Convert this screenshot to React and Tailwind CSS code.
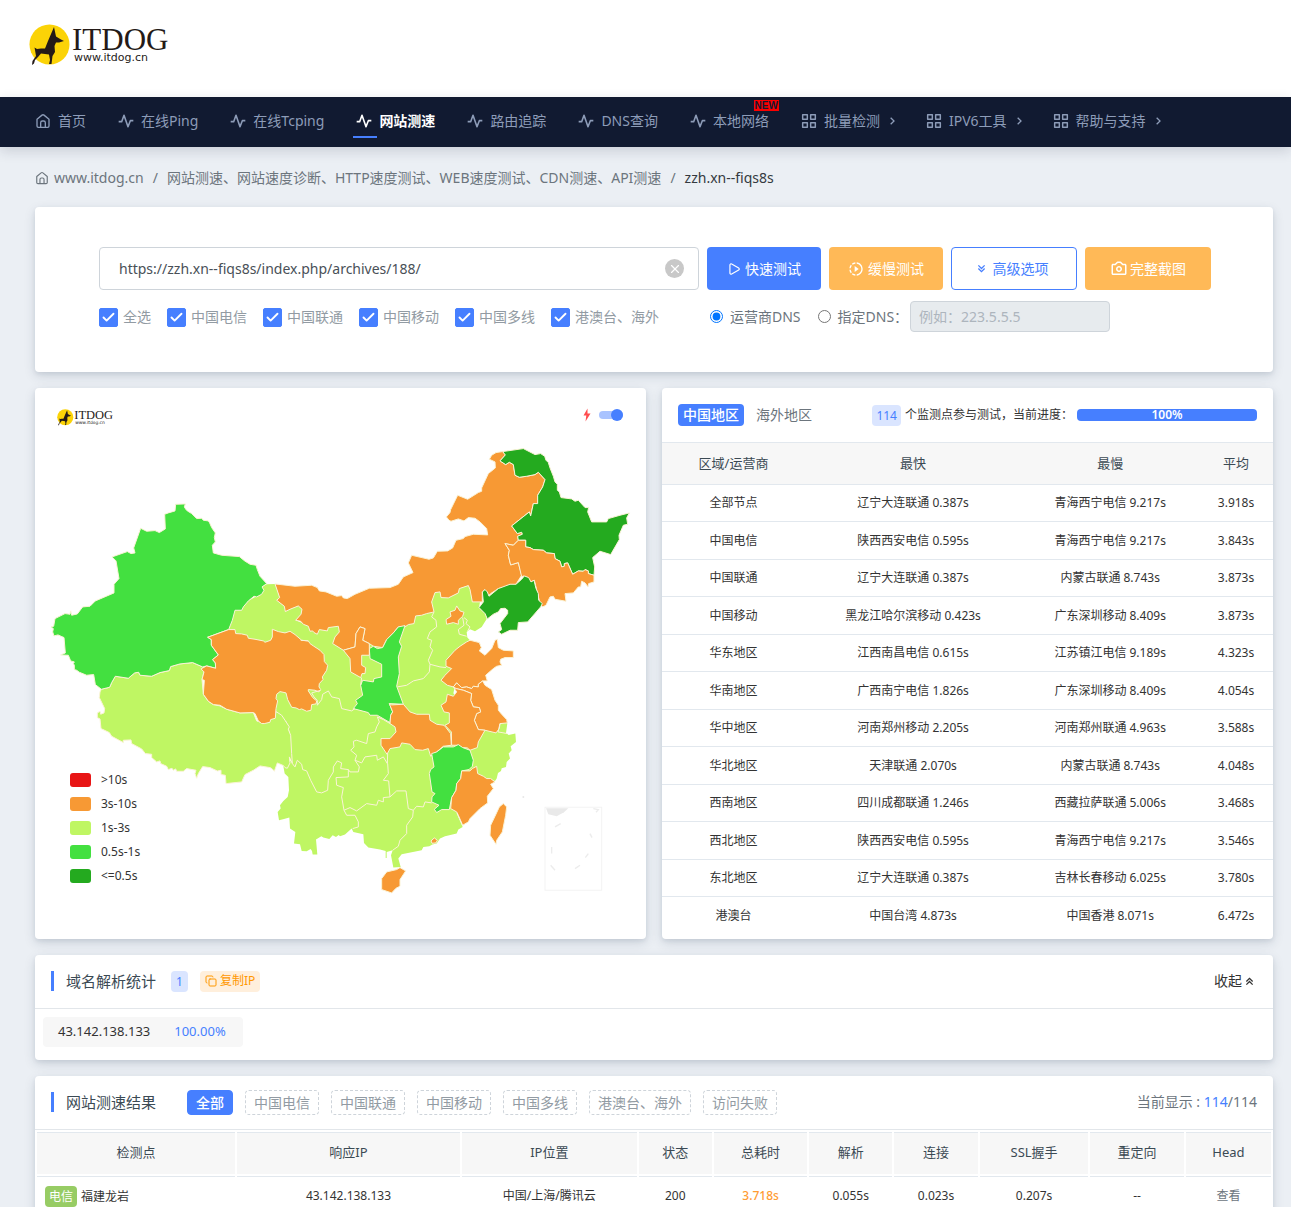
import React from "react";
import { BiCamera, BiChevronsDown, BiChevronsUp, BiChevronRight } from "react-icons/bi";
import { MdOutlineSlowMotionVideo } from "react-icons/md";
import { Play, Check, X, Copy } from "lucide-react";

const cardShadow = "shadow-[0_4px_12px_rgba(30,50,80,0.14),0_2px_4px_rgba(30,50,80,0.08)]";

function StrokeIcon({ size, className, children }) {
  return (
    <svg
      width={size}
      height={size}
      viewBox="0 0 24 24"
      fill="none"
      stroke="currentColor"
      strokeWidth="2"
      strokeLinejoin="round"
      className={className}
      aria-hidden="true"
    >
      {children}
    </svg>
  );
}

function HomeIcon(props) {
  return (
    <StrokeIcon {...props}>
      <path d="M3 9.500 L10.500 3.200 Q12 2 13.500 3.200 L21 9.500 V19.500 Q21 21.500 19 21.500 H5 Q3 21.500 3 19.500 Z" />
      <path d="M8.500 21 V14.500 Q8.500 12 11 12 H13 Q15.500 12 15.500 14.500 V21" />
    </StrokeIcon>
  );
}

function PulseIcon(props) {
  return (
    <StrokeIcon {...props}>
      <path d="M1 13 H5.500 L9 3.500 L15 20.500 L18.500 11.500 H23" strokeWidth="2.400" />
    </StrokeIcon>
  );
}

function GridIcon(props) {
  return (
    <StrokeIcon {...props}>
      <path
        d="M2.500 2.500 H9.500 V9.500 H2.500 Z M14.500 2.500 H21.500 V9.500 H14.500 Z M2.500 14.500 H9.500 V21.500 H2.500 Z M14.500 14.500 H21.500 V21.500 H14.500 Z"
        strokeWidth="2.200"
      />
    </StrokeIcon>
  );
}

function Logo({ className }) {
  return (
    <svg viewBox="0 0 144 42" className={className} role="img" aria-label="ITDOG">
      <circle cx="20.500" cy="20.500" r="20" fill="#fbd307" />
      <path
        d="M25 3 L27 12.500 L32 15.500 L35 17 L30 18.500 L27 18.500 L25.500 22 L26 28 L23.500 32 L22.500 40 L20 40 L21 36 L20 30.500 L12 29.500 L9 33 L6 36 L5 39.500 L3 41 L3.500 37 L7 32 L6 26 L5.500 23.500 L8 25 L12 24.500 L16 24.500 L19 17 Z"
        fill="#241a17"
      />
      <text x="43" y="26" fontSize="31" fontFamily="'Liberation Serif', serif" fill="#241a17">
        ITDOG
      </text>
      <text x="45" y="37" fontSize="11" fontFamily="'DejaVu Sans', sans-serif" fill="#241a17">
        www.itdog.cn
      </text>
    </svg>
  );
}

const navItems = [
  { label: "首页", icon: HomeIcon },
  { label: "在线Ping", icon: PulseIcon },
  { label: "在线Tcping", icon: PulseIcon },
  { label: "网站测速", icon: PulseIcon, active: true },
  { label: "路由追踪", icon: PulseIcon },
  { label: "DNS查询", icon: PulseIcon },
  { label: "本地网络", icon: PulseIcon, isNew: true },
  { label: "批量检测", icon: GridIcon, more: true },
  { label: "IPV6工具", icon: GridIcon, more: true },
  { label: "帮助与支持", icon: GridIcon, more: true },
];

function Nav() {
  return (
    <nav className="bg-[#111a31] h-[50px] pl-[35px] pr-4 flex items-stretch gap-8 text-sm text-[#8d9cb8] shadow-[0_4px_12px_rgba(30,40,70,0.16)] relative">
      {navItems.map(({ label, icon: Icon, active, isNew, more }) => (
        <a
          key={label}
          href="#"
          className={
            "relative flex items-center pb-0.5 whitespace-nowrap " + (active ? "text-white font-bold" : "")
          }
        >
          <Icon size={16} className="mr-[7px] shrink-0" />
          {label}
          {more && <BiChevronRight size={16} className="ml-1 -mr-1.5" />}
          {active && <span className="absolute -left-[3px] bottom-[9px] w-6 h-0.5 bg-[#467fff]" />}
          {isNew && (
            <span className="absolute -right-2.5 top-[3px] bg-[#fb0000] text-[#111a31] text-[10px] leading-[11px] font-bold px-px font-['Liberation_Sans',sans-serif]">
              NEW
            </span>
          )}
        </a>
      ))}
    </nav>
  );
}

const isps = ["全选", "中国电信", "中国联通", "中国移动", "中国多线", "港澳台、海外"];

function SearchCard() {
  return (
    <form
      onSubmit={(e) => e.preventDefault()}
      className={"bg-white rounded pt-10 pb-10 pl-16 pr-[62px] " + cardShadow}
    >
      <div className="flex gap-2">
        <div className="flex-1 h-[43px] flex items-center border border-[#ced4da] rounded-sm pl-[19px] pr-3.5">
          <input
            type="text"
            aria-label="网址"
            defaultValue="https://zzh.xn--fiqs8s/index.php/archives/188/"
            className="flex-1 min-w-0 text-sm text-[#495057] outline-none"
          />
          <button
            type="button"
            aria-label="清除"
            className="size-[19px] rounded-full bg-[#c8c8c8] text-white flex items-center justify-center"
          >
            <X size={14} />
          </button>
        </div>
        <button className="w-[114px] rounded-sm bg-[#467fff] text-white text-sm flex items-center justify-center gap-1">
          <Play size={14} />
          快速测试
        </button>
        <button className="w-[114px] rounded-sm bg-[#ffb957] text-white text-sm flex items-center justify-center gap-1">
          <MdOutlineSlowMotionVideo size={16} />
          缓慢测试
        </button>
        <button className="w-[126px] rounded-sm border border-[#467fff] text-[#467fff] text-sm flex items-center justify-center gap-1 pr-1.5">
          <BiChevronsDown size={15} />
          高级选项
        </button>
        <button className="w-[126px] rounded-sm bg-[#ffb957] text-white text-sm flex items-center justify-center gap-0.5">
          <BiCamera size={18} />
          完整截图
        </button>
      </div>
      <div className="grid grid-cols-[1fr_504px] gap-2 mt-[11px] text-sm">
        <div className="flex items-center gap-4 text-[#929ba3] whitespace-nowrap pt-px">
          {isps.map((t) => (
            <label key={t} className="flex items-center gap-[5px]">
              <span className="grid place-items-center size-[19px]">
                <input
                  type="checkbox"
                  defaultChecked
                  className="appearance-none size-[19px] rounded-xs border border-[#467fff] checked:bg-[#467fff] [grid-area:1/1]"
                />
                <Check size={15} strokeWidth={3} className="text-white pointer-events-none [grid-area:1/1] z-10" />
              </span>
              {t}
            </label>
          ))}
        </div>
        <div className="flex items-center text-[#6c757d] pl-[3px] whitespace-nowrap">
          <label className="flex items-center gap-[7px] mr-[17px]">
            <input type="radio" name="dns" defaultChecked className="size-[13px] accent-[#0075ff]" />
            运营商DNS
          </label>
          <label className="flex items-center gap-[7px] mr-0.5">
            <input type="radio" name="dns" className="size-[13px]" />
            指定DNS：
          </label>
          <input
            type="text"
            disabled
            aria-label="指定DNS"
            placeholder="例如：223.5.5.5"
            className="w-[200px] h-[31px] rounded-sm border border-[#ced4da] bg-[#e7ebee] px-2 placeholder:text-[#adb5bd]"
          />
        </div>
      </div>
    </form>
  );
}

const C = { red: "#e81515", orange: "#f79934", lime: "#bff663", green: "#43e040", dark: "#24aa1f" };

/* Lime area that carries all the southern and central provinces. */
const limeBase =
  "-34,208 -22,165 -15,150 5,150 12,138 25,122 50,108 72,90 66,80 80,72 105,71 119,112 110,120 133,138 136,154 150,147 175,137 186,147 183,162 167,180 190,190 300,192 400,190 480,150 575,155 575,120 585,97 600,95 603,112 625,113 655,98 658,85 685,76 690,88 697,125 720,125 717,142 735,160 740,176 725,200 705,213 690,207 680,215 682,232 690,240 660,300 640,400 720,450 778,492 797,485 802,490 798,518 806,524 826,520 828,545 812,558 815,570 806,580 810,595 800,605 798,620 785,624 783,632 774,638 770,655 765,662 700,640 650,760 668,800 655,808 650,820 615,828 600,835 590,850 577,853 568,858 550,860 545,870 515,876 485,882 475,895 482,920 460,922 453,885 458,870 440,875 440,893 437,893 437,872 420,868 385,862 372,848 370,822 340,815 335,805 315,823 300,828 296,824 288,830 278,825 268,836 250,832 244,828 228,838 232,883 218,883 216,872 212,866 200,873 185,872 180,852 162,850 166,815 150,805 148,772 132,776 117,780 113,755 122,745 120,735 130,722 143,710 147,690 145,650 134,640 130,618 155,600 150,520 140,485 110,455 0,320";

const provinces = [
  {
    name: "西藏",
    color: C.lime,
    points:
      "-416,387 -391,381 -385,367 -374,348 -335,354 -316,338 -304,336 -300,345 -265,348 -240,337 -212,331 -208,319 -180,311 -142,307 -112,320 -100,317 -108,335 -114,358 -110,402 -95,423 -80,433 -60,437 -40,447 0,458 40,457 50,482 73,490 110,455 125,465 135,480 148,500 145,507 152,525 155,580 157,610 148,590 150,608 142,624 135,622 130,616 112,608 103,633 97,626 90,622 60,617 40,630 15,643 5,665 -42,670 -44,645 -57,643 -57,630 -68,632 -90,622 -112,619 -125,640 -130,654 -135,640 -132,630 -160,625 -170,633 -190,633 -193,626 -200,630 -204,624 -215,628 -220,618 -238,610 -240,602 -250,605 -265,592 -265,582 -284,580 -295,566 -325,550 -327,539 -350,540 -350,547 -385,528 -392,517 -417,505 -420,476 -428,472 -428,458 -420,453 -418,462 -408,458 -406,445 -422,412 -420,395",
  },
  {
    name: "新疆",
    color: C.green,
    points:
      "-193,-168 -164,-169 -167,-160 -162,-152 -158,-148 -145,-140 -130,-125 -115,-126 -110,-120 -95,-118 -91,-112 -85,-98 -74,-82 -77,-68 -74,-55 -83,-45 -80,-22 -55,-15 -2,-11 14,2 30,12 48,15 52,28 60,48 80,70 66,80 72,90 65,102 50,110 42,108 25,122 10,140 5,150 -15,150 -23,180 -34,208 -97,231 -86,238 -86,255 -65,284 -82,298 -74,308 -73,324 -100,317 -112,320 -142,307 -180,311 -208,319 -212,331 -240,337 -265,348 -300,345 -304,336 -316,338 -335,354 -374,348 -385,367 -391,381 -416,387 -434,373 -439,343 -460,345 -482,336 -490,330 -497,328 -497,315 -500,310 -497,305 -508,302 -515,285 -538,284 -524,278 -528,232 -546,224 -558,227 -562,215 -560,205 -567,200 -559,198 -555,175 -525,160 -510,162 -508,152 -505,165 -488,161 -472,140 -450,138 -434,122 -378,98 -378,72 -363,55 -372,2 -384,-10 -338,-26 -327,-20 -315,-22 -319,-37 -298,-96 -280,-87 -255,-89 -242,-83 -224,-94 -226,-138 -215,-142 -195,-148",
  },
  {
    name: "内蒙古",
    color: C.orange,
    points:
      "105,71 165,78 215,75 232,82 238,92 258,95 290,108 305,106 310,113 322,115 345,102 388,84 450,82 475,72 490,50 519,37 505,8 515,-15 567,-3 580,-7 592,-27 623,-28 638,-37 648,-60 670,-65 675,-71 700,-78 743,-76 740,-95 720,-115 705,-126 685,-128 672,-118 655,-124 633,-117 627,-120 619,-130 630,-143 632,-152 653,-195 683,-183 715,-203 725,-207 725,-217 745,-260 766,-277 765,-295 748,-303 755,-315 768,-323 788,-326 796,-316 780,-298 797,-287 808,-294 820,-287 825,-255 838,-249 860,-252 885,-257 895,-264 915,-242 908,-220 893,-195 893,-170 880,-170 872,-133 868,-145 815,-103 832,-80 845,-84 847,-78 833,-72 835,-60 820,-45 795,-50 808,-30 805,-15 812,14 835,7 845,45 828,72 775,85 752,100 745,107 735,88 727,95 727,125 697,125 690,88 685,76 658,85 655,98 625,113 603,112 600,95 585,97 575,125 582,155 560,160 545,165 527,167 522,190 505,193 495,200 475,200 460,218 440,238 428,262 400,258 388,250 368,240 375,205 360,200 348,220 345,260 310,270 278,250 285,230 298,215 295,198 265,202 262,212 238,208 232,222 222,217 218,212 210,213 205,198 190,192 182,183 167,180 183,162 186,147 175,137 150,147 136,154 133,138 110,120 119,112",
  },
  {
    name: "黑龙江",
    color: C.dark,
    points:
      "788,-326 850,-335 885,-317 902,-320 914,-312 918,-300 925,-293 930,-277 940,-252 945,-235 952,-228 952,-210 958,-205 963,-188 995,-184 1005,-177 1015,-180 1035,-158 1046,-158 1043,-145 1055,-115 1100,-115 1105,-125 1140,-135 1168,-142 1160,-127 1163,-108 1150,-105 1137,-75 1138,-62 1112,-17 1080,-27 1058,-8 1064,20 1062,45 1045,40 1045,32 1035,28 1030,33 1015,32 998,42 983,8 973,10 973,18 965,20 960,3 945,-5 943,-20 920,-22 910,-30 880,-32 870,-38 857,-40 857,-60 835,-60 833,-72 847,-78 845,-84 832,-80 815,-103 868,-145 872,-133 880,-170 893,-170 893,-195 908,-220 915,-242 895,-264 885,-257 860,-252 838,-249 825,-255 820,-287 808,-294 797,-287 780,-298 796,-316",
  },
  {
    name: "吉林",
    color: C.orange,
    points:
      "857,-60 835,-60 820,-45 795,-50 808,-30 805,-15 812,14 835,7 845,50 850,47 873,65 883,60 900,130 908,140 918,135 930,110 940,108 945,117 978,123 975,100 1000,98 1015,80 1022,80 1025,63 1035,68 1044,80 1046,70 1062,65 1062,45 1045,40 1045,32 1035,28 1030,33 1015,32 998,42 983,8 973,10 973,18 965,20 960,3 945,-5 943,-20 920,-22 910,-30 880,-32 870,-38 857,-40",
  },
  {
    name: "辽宁",
    color: C.dark,
    points:
      "845,57 853,47 866,52 873,65 882,60 888,85 895,100 896,120 907,130 902,140 863,185 835,187 833,210 810,210 785,222 775,215 785,208 780,190 803,160 803,150 795,144 782,145 775,155 760,162 742,176 735,160 717,142 730,125 727,95 735,88 742,95 747,108 775,85 810,72 828,72",
  },
  {
    name: "青海",
    color: C.orange,
    points:
      "-97,231 -34,208 -15,208 -13,220 5,221 22,225 25,234 45,237 70,242 75,246 92,240 97,230 97,207 115,214 135,218 150,213 165,223 185,240 205,242 210,250 220,257 240,270 252,283 253,304 263,315 260,330 247,350 249,358 238,370 237,380 242,388 237,395 225,390 205,388 205,392 218,412 230,422 228,431 215,433 213,450 200,453 185,446 178,448 168,443 155,441 143,418 138,398 120,394 110,402 108,415 113,422 108,445 106,474 92,478 90,486 73,490 65,490 55,482 45,460 40,457 0,458 -40,447 -60,435 -80,433 -95,423 -110,402 -107,360 -114,358 -108,335 -117,326 -100,317 -73,324 -74,308 -82,298 -65,284 -86,255 -86,238",
  },
  {
    name: "陕西",
    color: C.green,
    points:
      "495,196 475,200 460,218 440,238 428,262 412,265 400,258 388,265 390,295 425,312 425,350 402,355 400,365 368,360 362,375 368,405 347,420 352,430 340,445 385,457 390,465 412,465 450,487 452,465 458,455 448,430 490,432 470,378 478,340 475,290 485,258 478,245",
  },
  {
    name: "宁夏",
    color: C.orange,
    points:
      "310,270 345,260 348,220 360,200 375,205 368,240 388,250 388,285 365,285 365,315 377,322 375,340 366,340 362,352 332,335 330,295",
  },
  {
    name: "北京",
    color: C.orange,
    points: "618,178 633,168 630,155 645,150 650,137 660,152 672,156 668,168 655,180 655,192 640,187 620,192",
  },
  {
    name: "山东",
    color: C.orange,
    points:
      "680,245 690,240 718,247 724,262 718,272 735,285 755,265 765,240 772,237 775,262 790,270 820,272 820,292 795,292 782,297 780,305 785,315 770,318 760,325 737,345 742,362 728,362 715,372 715,380 700,378 695,385 680,380 665,382 650,368 640,380 622,375 603,360 615,345 635,325 618,318 618,300 645,270 660,258",
  },
  {
    name: "江苏",
    color: C.orange,
    points:
      "640,380 650,368 665,382 680,380 695,385 700,378 715,380 715,372 728,362 735,375 755,388 765,420 775,435 775,450 785,462 800,478 802,488 780,490 778,505 768,518 735,510 715,508 703,480 710,460 722,455 718,442 700,440 692,420 695,400 670,390 648,385",
  },
  {
    name: "安徽",
    color: C.orange,
    points:
      "640,380 648,385 670,390 695,400 692,420 700,440 718,442 722,455 710,460 703,480 715,508 735,510 715,545 712,562 690,570 682,563 668,562 655,555 635,555 634,515 615,495 628,488 628,458 612,455 603,435 618,425 622,402 640,408 650,395",
  },
  {
    name: "湖北",
    color: C.orange,
    points:
      "448,430 455,434 490,432 510,455 530,462 568,462 570,480 590,492 612,495 618,502 632,520 634,555 610,558 590,575 572,588 565,565 548,570 525,568 510,552 485,548 480,560 450,565 441,582 423,555 423,535 450,535 468,515 465,500 450,490 452,465 458,455",
  },
  {
    name: "江西",
    color: C.green,
    points:
      "575,580 590,575 610,560 640,560 655,553 668,562 690,570 700,600 697,618 687,628 665,632 662,655 650,670 648,690 635,712 628,748 605,748 590,757 583,747 597,735 575,725 576,710 585,700 576,695 568,640 572,628 582,620",
  },
  {
    name: "福建",
    color: C.orange,
    points:
      "690,632 697,625 710,618 713,640 730,648 740,655 752,655 765,665 752,672 760,685 742,708 743,728 720,745 690,775 685,785 668,795 655,765 650,755 632,745 635,712 648,690 650,670 662,655 665,632",
  },
  { name: "台湾", color: C.orange, points: "778,740 790,730 800,740 797,765 787,815 770,840 768,852 750,825 752,795 765,768" },
  { name: "海南", color: C.orange, points: "440,935 470,928 480,922 497,932 480,958 480,978 468,984 455,998 425,988 425,955" },
  { name: "香港", color: C.orange, points: "573,842 583,833 592,840 588,848 576,849" },
];

const borders = [
  "582,155 575,170 588,180 590,200 570,215 562,235 575,240 570,260 578,270 565,300 570,312 600,320 618,322",
  "570,312 568,335 550,355 520,362 500,375 472,380",
  "668,172 672,195 655,208 658,222 680,228",
  "672,172 682,180 678,190 690,200 683,212",
  "242,390 215,398 222,410 232,420 232,435 245,418 248,402 265,392 275,410 298,415 305,445 335,452 345,445",
  "412,470 418,485 410,500 405,515 385,520 380,550 350,540 340,543 342,560 332,570 350,585 345,600 365,608 375,590 410,585 412,600 430,590 442,610 443,580",
  "412,470 430,478 450,490",
  "157,610 165,620 172,600 185,612 188,628 200,632 212,660 230,695 245,698 263,690 265,660 280,635 280,620 292,602 305,608 302,625 325,628 330,635 355,635 358,620 345,600",
  "325,628 325,650 288,652 290,675 310,682 305,710 312,750 330,742 350,752 380,730 410,735 415,720 430,725 430,712 450,710 470,692 498,692 505,745 520,750 530,738 550,740 555,725 575,728",
  "443,610 445,640 430,660 446,662 450,710",
  "520,750 518,770 500,795 500,820 480,840 475,858 458,870",
  "312,750 320,765 345,765 355,785 355,800 338,805",
  "780,490 774,515 802,520",
  "365,352 362,375",
  "182,240 205,242",
];

const legend = [
  [">10s", "bg-[#e81515]"],
  ["3s-10s", "bg-[#f79934]"],
  ["1s-3s", "bg-[#bff663]"],
  ["0.5s-1s", "bg-[#43e040]"],
  ["<=0.5s", "bg-[#24aa1f]"],
];

function MapCard() {
  return (
    <section className={"relative bg-white rounded " + cardShadow}>
      <svg viewBox="-615 -516 1833 1650" className="w-full h-full block" role="img" aria-label="中国地图">
        <polygon points={limeBase} fill={C.lime} />
        <g stroke="#fbf3d6" strokeWidth="3" strokeLinejoin="round">
          {provinces.map((p) => (
            <polygon key={p.name} points={p.points} fill={p.color} />
          ))}
          {borders.map((b) => (
            <polyline key={b} points={b} fill="none" />
          ))}
        </g>
        <rect x="915" y="741" width="170" height="249" fill="none" stroke="#f3f3f3" strokeWidth="3" />
        <path d="M918 744 H985 L972 756 L950 768 L925 762 Z" fill="#e9e9e9" />
        <path
          d="M1060 745 L1075 748 L1068 756 M962 790 L945 800 M1050 820 L1056 832 M935 860 V880 M1045 880 L1036 892 M1020 915 L1005 925 M932 915 L945 930"
          fill="none"
          stroke="#ececec"
          strokeWidth="4"
        />
        <circle cx="850" cy="710" r="3" fill="#e8e8e8" />
      </svg>
      <div className="absolute left-[22px] top-[21px] w-[58px]">
        <Logo className="w-full" />
      </div>
      <div className="absolute right-[23px] top-5 flex items-center gap-2">
        <svg width="8" height="14" viewBox="0 0 8 14" aria-hidden="true">
          <path d="M4.500 0.500 L0.500 7.500 H3.300 L2.500 13.500 L7.500 5.500 H4.500 Z" fill="#ff4d4f" />
        </svg>
        <label className="flex items-center w-6 h-3 relative">
          <input
            type="checkbox"
            defaultChecked
            aria-label="快速模式"
            className="appearance-none w-6 h-2 rounded-full bg-[#a9c3ff]"
          />
          <span className="absolute right-0 top-0 size-3 rounded-full bg-[#467fff]" />
        </label>
      </div>
      <ul className="absolute left-[35px] bottom-[51px] text-xs text-[#333]">
        {legend.map(([t, c]) => (
          <li key={t} className="flex items-center gap-2.5 h-6">
            <span className={"w-[21px] h-3.5 rounded-[3px] " + c} />
            {t}
          </li>
        ))}
      </ul>
    </section>
  );
}

const regionRows = [
  ["全部节点", "辽宁大连联通 0.387s", "青海西宁电信 9.217s", "3.918s"],
  ["中国电信", "陕西西安电信 0.595s", "青海西宁电信 9.217s", "3.843s"],
  ["中国联通", "辽宁大连联通 0.387s", "内蒙古联通 8.743s", "3.873s"],
  ["中国移动", "黑龙江哈尔滨移动 0.423s", "广东深圳移动 8.409s", "3.873s"],
  ["华东地区", "江西南昌电信 0.615s", "江苏镇江电信 9.189s", "4.323s"],
  ["华南地区", "广西南宁电信 1.826s", "广东深圳移动 8.409s", "4.054s"],
  ["华中地区", "河南郑州移动 2.205s", "河南郑州联通 4.963s", "3.588s"],
  ["华北地区", "天津联通 2.070s", "内蒙古联通 8.743s", "4.048s"],
  ["西南地区", "四川成都联通 1.246s", "西藏拉萨联通 5.006s", "3.468s"],
  ["西北地区", "陕西西安电信 0.595s", "青海西宁电信 9.217s", "3.546s"],
  ["东北地区", "辽宁大连联通 0.387s", "吉林长春移动 6.025s", "3.780s"],
  ["港澳台", "中国台湾 4.873s", "中国香港 8.071s", "6.472s"],
];

function RegionCard() {
  return (
    <section className={"bg-white rounded pb-1 " + cardShadow}>
      <header className="h-[54px] px-4 flex items-center justify-between whitespace-nowrap">
        <div className="flex items-center gap-3 text-sm">
          <button className="bg-[#467fff] text-white font-medium rounded px-[5px] h-[22px] leading-[22px]">中国地区</button>
          <button className="text-[#6c757d]">海外地区</button>
        </div>
        <div className="flex items-center text-xs text-[#333]">
          <span className="bg-[#dae5ff] text-[#467fff] rounded px-1 h-[21px] leading-[21px] mr-1">114</span>
          个监测点参与测试，当前进度：
          <div className="ml-1 w-[180px] h-3 rounded bg-[#467fff] text-white text-center leading-3 font-semibold">
            100%
          </div>
        </div>
      </header>
      <table className="w-full table-fixed text-xs text-center text-[#333] border-collapse">
        <thead>
          <tr className="h-[42px] bg-[#f7f7f7] border-y border-[#e2e8ee] text-[13px] text-[#3b4a54]">
            <th className="font-normal w-[23.4%]">区域/运营商</th>
            <th className="font-normal w-[35.4%]">最快</th>
            <th className="font-normal w-[29.1%]">最慢</th>
            <th className="font-normal">平均</th>
          </tr>
        </thead>
        <tbody>
          {regionRows.map((r) => (
            <tr key={r[0]} className="odd:h-[37px] even:h-[38px] border-b border-[#e2e8ee] last:border-0">
              {r.map((c, i) => (
                <td key={i}>{c}</td>
              ))}
            </tr>
          ))}
        </tbody>
      </table>
    </section>
  );
}

function CardTitle({ children }) {
  return <h2 className="border-l-[3px] border-[#467fff] h-5 leading-5 pl-3 text-[15px] text-[#3b4a54]">{children}</h2>;
}

function DnsCard() {
  return (
    <section className={"bg-white rounded " + cardShadow}>
      <header className="h-[54px] px-4 flex items-center border-b border-[#e2e6ea] whitespace-nowrap">
        <CardTitle>域名解析统计</CardTitle>
        <span className="ml-[15px] bg-[#dae5ff] text-[#467fff] text-xs rounded px-[5px] h-[21px] leading-[21px]">1</span>
        <button className="ml-3 bg-[#ffefdc] text-[#ff9800] text-xs rounded px-[5px] h-[21px] flex items-center gap-[3px]">
          <Copy size={12} />
          复制IP
        </button>
        <button className="ml-auto text-sm text-[#333] flex items-center">
          收起
          <BiChevronsUp size={15} />
        </button>
      </header>
      <div className="px-2 pt-2 pb-[13px]">
        <div className="w-[200px] h-[30px] rounded-sm bg-[#f7f7f7] flex items-center gap-6 pl-[15px] text-[13px] text-[#333]">
          43.142.138.133
          <span className="text-[#467fff]">100.00%</span>
        </div>
      </div>
    </section>
  );
}

const filters = ["全部", "中国电信", "中国联通", "中国移动", "中国多线", "港澳台、海外", "访问失败"];
const columns = [
  ["检测点", "w-[16.3%]"],
  ["响应IP", "w-[18.3%]"],
  ["IP位置", "w-[14.4%]"],
  ["状态", "w-[6%]"],
  ["总耗时", "w-[7.7%]"],
  ["解析", "w-[6.8%]"],
  ["连接", "w-[6.9%]"],
  ["SSL握手", "w-[8.9%]"],
  ["重定向", "w-[7.7%]"],
  ["Head", "w-[7%]"],
];

function ResultsCard() {
  return (
    <section className={"bg-white rounded " + cardShadow}>
      <header className="h-[54px] px-4 flex items-center border-b border-[#e2e6ea] whitespace-nowrap">
        <CardTitle>网站测速结果</CardTitle>
        <div className="flex gap-3 ml-[31px] text-sm">
          {filters.map((f, i) => (
            <button
              key={f}
              className={
                "h-[25px] leading-[23px] px-2 rounded-sm border " +
                (i === 0
                  ? "bg-[#467fff] border-[#467fff] text-white font-medium"
                  : "border-dashed border-[#ced4da] text-[#929ba3]")
              }
            >
              {f}
            </button>
          ))}
        </div>
        <p className="ml-auto text-sm text-[#6c757d]">
          当前显示 : <span className="text-[#467fff]">114</span>/114
        </p>
      </header>
      <table className="w-full table-fixed border-separate border-spacing-0.5 text-xs text-center text-[#333]">
        <thead>
          <tr className="h-[42px] text-[13px] text-[#3b4a54]">
            {columns.map(([t, w]) => (
              <th key={t} className={"font-normal bg-[#f7f7f7] border-t border-[#e2e8ee] " + w}>
                {t}
              </th>
            ))}
          </tr>
        </thead>
        <tbody>
          <tr className="h-10 [&>td]:border-t [&>td]:border-[#e2e8ee]">
            <td className="text-left pl-2">
              <span className="inline-block bg-[#97cc64] text-white rounded px-1 h-[21px] leading-[21px] mr-1">电信</span>
              福建龙岩
            </td>
            <td>43.142.138.133</td>
            <td>中国/上海/腾讯云</td>
            <td>200</td>
            <td className="text-[#ff9c33] font-medium">3.718s</td>
            <td>0.055s</td>
            <td>0.023s</td>
            <td>0.207s</td>
            <td>--</td>
            <td>
              <a href="#" className="text-[#6c757d]">
                查看
              </a>
            </td>
          </tr>
        </tbody>
      </table>
    </section>
  );
}

export default function App() {
  return (
    <div className="min-h-screen bg-[#ebeff4] font-['Noto_Sans','Noto_Sans_CJK_SC',sans-serif]">
      <header className="bg-white h-[97px] pl-[29px] pt-6">
        <a href="#" className="inline-block">
          <Logo className="w-36" />
        </a>
      </header>
      <Nav />
      <main className="pl-[35px] pr-[18px] pb-4 flex flex-col gap-4">
        <div className="h-11 flex items-center pt-[18px] text-sm text-[#6c757d] whitespace-nowrap">
          <HomeIcon size={14} className="mr-[5px]" />
          <a href="#">www.itdog.cn</a>
          <span className="mx-[9px]">/</span>
          <a href="#">网站测速、网站速度诊断、HTTP速度测试、WEB速度测试、CDN测速、API测速</a>
          <span className="mx-[9px]">/</span>
          <span className="text-[#343a40]">zzh.xn--fiqs8s</span>
        </div>
        <SearchCard />
        <div className="grid grid-cols-2 gap-4">
          <MapCard />
          <RegionCard />
        </div>
        <DnsCard />
        <ResultsCard />
      </main>
    </div>
  );
}
